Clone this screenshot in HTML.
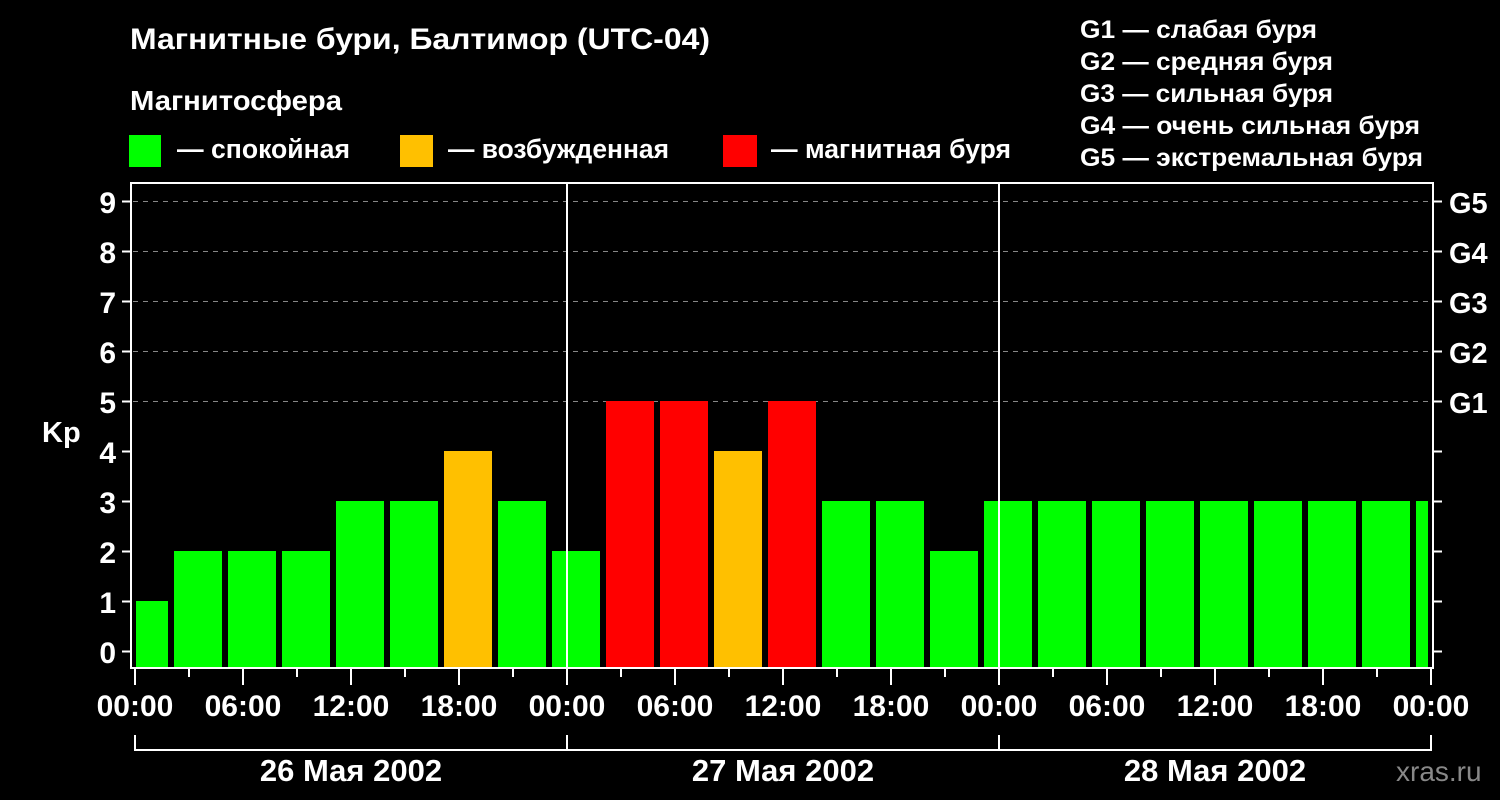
<!DOCTYPE html>
<html><head><meta charset="utf-8"><style>html,body{margin:0;padding:0;background:#000}svg{display:block}</style></head>
<body>
<svg width="1500" height="800" xmlns="http://www.w3.org/2000/svg" font-family="Liberation Sans, sans-serif" font-weight="bold" fill="#fff">
<rect width="1500" height="800" fill="#000"/>
<text x="130" y="49" font-size="30" textLength="580" lengthAdjust="spacingAndGlyphs">Магнитные бури, Балтимор (UTC-04)</text>
<text x="130" y="110" font-size="28" textLength="212" lengthAdjust="spacingAndGlyphs">Магнитосфера</text>
<rect x="129" y="135" width="32" height="32" fill="#00ff00"/>
<text x="177" y="158" font-size="27" textLength="173" lengthAdjust="spacingAndGlyphs">— спокойная</text>
<rect x="400" y="135" width="33" height="32" fill="#ffc000"/>
<text x="448" y="158" font-size="27" textLength="221" lengthAdjust="spacingAndGlyphs">— возбужденная</text>
<rect x="723" y="135" width="34" height="32" fill="#ff0000"/>
<text x="771" y="158" font-size="27" textLength="240" lengthAdjust="spacingAndGlyphs">— магнитная буря</text>
<g font-size="25">
<text x="1080" y="38" textLength="237" lengthAdjust="spacingAndGlyphs">G1 — слабая буря</text>
<text x="1080" y="70" textLength="253" lengthAdjust="spacingAndGlyphs">G2 — средняя буря</text>
<text x="1080" y="102" textLength="253" lengthAdjust="spacingAndGlyphs">G3 — сильная буря</text>
<text x="1080" y="134" textLength="340" lengthAdjust="spacingAndGlyphs">G4 — очень сильная буря</text>
<text x="1080" y="166" textLength="343" lengthAdjust="spacingAndGlyphs">G5 — экстремальная буря</text>
</g>
<g stroke="#888" stroke-width="1" stroke-dasharray="5,5">
<line x1="133" y1="201.5" x2="1432" y2="201.5"/>
<line x1="133" y1="251.5" x2="1432" y2="251.5"/>
<line x1="133" y1="301.5" x2="1432" y2="301.5"/>
<line x1="133" y1="351.5" x2="1432" y2="351.5"/>
<line x1="133" y1="401.5" x2="1432" y2="401.5"/>
</g>
<g>
<rect x="136" y="601" width="32" height="66" fill="#00ff00"/>
<rect x="174" y="551" width="48" height="116" fill="#00ff00"/>
<rect x="228" y="551" width="48" height="116" fill="#00ff00"/>
<rect x="282" y="551" width="48" height="116" fill="#00ff00"/>
<rect x="336" y="501" width="48" height="166" fill="#00ff00"/>
<rect x="390" y="501" width="48" height="166" fill="#00ff00"/>
<rect x="444" y="451" width="48" height="216" fill="#ffc000"/>
<rect x="498" y="501" width="48" height="166" fill="#00ff00"/>
<rect x="552" y="551" width="48" height="116" fill="#00ff00"/>
<rect x="606" y="401" width="48" height="266" fill="#ff0000"/>
<rect x="660" y="401" width="48" height="266" fill="#ff0000"/>
<rect x="714" y="451" width="48" height="216" fill="#ffc000"/>
<rect x="768" y="401" width="48" height="266" fill="#ff0000"/>
<rect x="822" y="501" width="48" height="166" fill="#00ff00"/>
<rect x="876" y="501" width="48" height="166" fill="#00ff00"/>
<rect x="930" y="551" width="48" height="116" fill="#00ff00"/>
<rect x="984" y="501" width="48" height="166" fill="#00ff00"/>
<rect x="1038" y="501" width="48" height="166" fill="#00ff00"/>
<rect x="1092" y="501" width="48" height="166" fill="#00ff00"/>
<rect x="1146" y="501" width="48" height="166" fill="#00ff00"/>
<rect x="1200" y="501" width="48" height="166" fill="#00ff00"/>
<rect x="1254" y="501" width="48" height="166" fill="#00ff00"/>
<rect x="1308" y="501" width="48" height="166" fill="#00ff00"/>
<rect x="1362" y="501" width="48" height="166" fill="#00ff00"/>
<rect x="1416" y="501" width="12" height="166" fill="#00ff00"/>
</g>
<g stroke="#fff" stroke-width="2" fill="none">
<rect x="131" y="183" width="1302" height="485"/>
<line x1="567" y1="183" x2="567" y2="668"/>
<line x1="999" y1="183" x2="999" y2="668"/>
<path d="M122 201.5h9M122 251.5h9M122 301.5h9M122 351.5h9M122 401.5h9M122 451.5h9M122 501.5h9M122 551.5h9M122 601.5h9M122 651.5h9"/>
<path d="M1433 201.5h9M1433 251.5h9M1433 301.5h9M1433 351.5h9M1433 401.5h9M1433 451.5h9M1433 501.5h9M1433 551.5h9M1433 601.5h9M1433 651.5h9"/>
<path d="M135 668v17M243 668v17M351 668v17M459 668v17M567 668v17M675 668v17M783 668v17M891 668v17M999 668v17M1107 668v17M1215 668v17M1323 668v17M1431 668v17"/>
<path d="M189 668v9M297 668v9M405 668v9M513 668v9M621 668v9M729 668v9M837 668v9M945 668v9M1053 668v9M1161 668v9M1269 668v9M1377 668v9"/>
<path d="M135 735v15h1296v-15M567 735v15M999 735v15"/>
</g>
<g font-size="30" text-anchor="end">
<text x="116" y="213">9</text><text x="116" y="263">8</text><text x="116" y="313">7</text><text x="116" y="363">6</text><text x="116" y="413">5</text><text x="116" y="463">4</text><text x="116" y="513">3</text><text x="116" y="563">2</text><text x="116" y="613">1</text><text x="116" y="663">0</text>
</g>
<text x="42" y="442" font-size="29">Kp</text>
<g font-size="29">
<text x="1449" y="213">G5</text><text x="1449" y="263">G4</text><text x="1449" y="313">G3</text><text x="1449" y="363">G2</text><text x="1449" y="413">G1</text>
</g>
<g font-size="30" text-anchor="middle">
<text x="135" y="716">00:00</text><text x="243" y="716">06:00</text><text x="351" y="716">12:00</text><text x="459" y="716">18:00</text>
<text x="567" y="716">00:00</text><text x="675" y="716">06:00</text><text x="783" y="716">12:00</text><text x="891" y="716">18:00</text>
<text x="999" y="716">00:00</text><text x="1107" y="716">06:00</text><text x="1215" y="716">12:00</text><text x="1323" y="716">18:00</text>
<text x="1431" y="716">00:00</text>
</g>
<g font-size="31" text-anchor="middle">
<text x="351" y="781">26 Мая 2002</text><text x="783" y="781">27 Мая 2002</text><text x="1215" y="781">28 Мая 2002</text>
</g>
<text x="1396" y="781" font-size="28" font-weight="normal" fill="#888">xras.ru</text>
</svg>
</body></html>
